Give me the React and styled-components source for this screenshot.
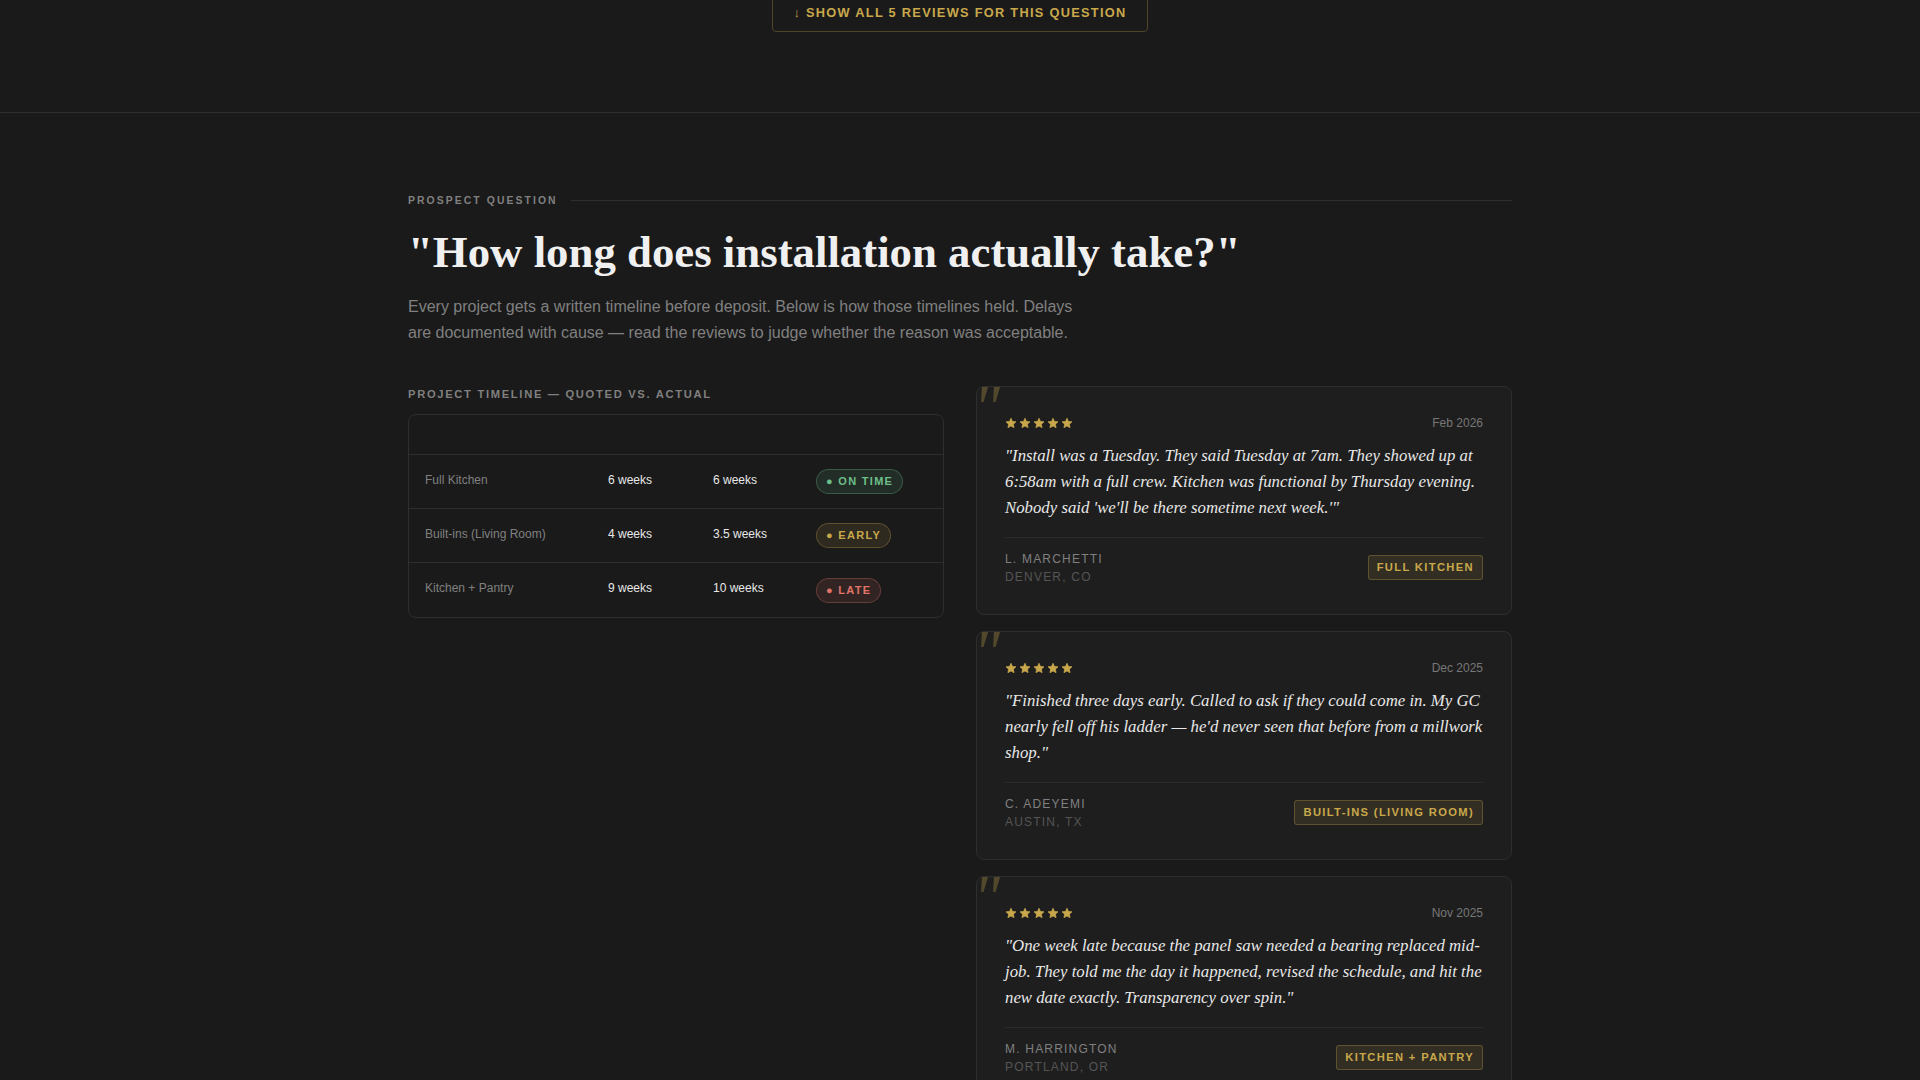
import React from 'react';
import styled, { createGlobalStyle } from 'styled-components';

const GOLD = '#c9a84c';
const MUTED = '#808080';
const SANS = '"Liberation Sans", Arial, sans-serif';
const SERIF = '"Liberation Serif", "Times New Roman", serif';

const GlobalStyle = createGlobalStyle`
  html, body {
    margin: 0;
    height: 1080px;
    overflow: hidden;
    background: #1a1a1a;
  }
`;

const Page = styled.div`
  background: #1a1a1a;
  color: #f0f0f0;
  font-family: ${SANS};
`;

const TopBar = styled.div`
  display: flex;
  justify-content: center;
  height: 112px;
  border-bottom: 1px solid #2e2e2e;
`;

const ShowAll = styled.button`
  align-self: flex-start;
  margin-top: -8px;
  height: 40px;
  width: 376px;
  padding: 0;
  background: transparent;
  border: 1px solid rgba(201, 168, 76, 0.3);
  border-radius: 4px;
  color: ${GOLD};
  font-family: ${SANS};
  font-size: 12.8px;
  font-weight: 700;
  letter-spacing: 0.1em;
`;

const Section = styled.section`
  width: 1104px;
  margin: 0 auto;
  padding-top: 79px;
`;

const Eyebrow = styled.div`
  display: flex;
  align-items: center;
  gap: 13px;
  height: 16px;
  color: ${MUTED};
  font-size: 10.4px;
  font-weight: 700;
  letter-spacing: 0.2em;

  &::after {
    content: '';
    flex: 1;
    height: 1px;
    background: #2e2e2e;
  }
`;

const Question = styled.h2`
  margin: 18px 0 0;
  font-family: ${SERIF};
  font-size: 44.8px;
  font-weight: 700;
  line-height: 1.2;
  color: #f0f0f0;
`;

const Intro = styled.p`
  margin: 14px 0 0;
  max-width: 680px;
  color: ${MUTED};
  font-size: 16px;
  line-height: 26px;
`;

const Columns = styled.div`
  display: grid;
  grid-template-columns: 1fr 1fr;
  gap: 32px;
  margin-top: 40px;
  align-items: start;
`;

const TableTitle = styled.div`
  margin-top: 1px;
  color: ${MUTED};
  font-size: 11.2px;
  font-weight: 700;
  letter-spacing: 0.15em;
  line-height: 14px;
`;

const TableCard = styled.div`
  margin-top: 13px;
  border: 1px solid #2e2e2e;
  border-radius: 8px;
  overflow: hidden;
`;

const Table = styled.table`
  width: 100%;
  border-collapse: collapse;
  table-layout: fixed;
  font-size: 12px;
`;

const HeadRow = styled.tr`
  height: 40px;
`;

const Row = styled.tr`
  height: 54px;
  border-top: 1px solid #2e2e2e;
`;

const Cell = styled.td`
  padding: 0 16px 4px;
  color: ${props => (props.$muted ? MUTED : '#e8e8e8')};
`;

const BadgeCell = styled.td`
  padding: 0 16px;
`;

const BADGES = {
  ontime: { color: '#6dbf8a', bg: 'rgba(109, 191, 138, 0.12)', border: 'rgba(109, 191, 138, 0.3)' },
  early: { color: GOLD, bg: 'rgba(201, 168, 76, 0.12)', border: 'rgba(201, 168, 76, 0.3)' },
  late: { color: '#e0746a', bg: 'rgba(224, 116, 106, 0.12)', border: 'rgba(224, 116, 106, 0.3)' },
};

const Badge = styled.span`
  display: inline-block;
  padding: 0 9px;
  height: 25px;
  box-sizing: border-box;
  line-height: 23px;
  border-radius: 20px;
  border: 1px solid ${props => BADGES[props.$kind].border};
  background: ${props => BADGES[props.$kind].bg};
  color: ${props => BADGES[props.$kind].color};
  font-size: 11px;
  font-weight: 700;
  letter-spacing: 1.3px;
  vertical-align: middle;
`;

const Reviews = styled.div`
  display: flex;
  flex-direction: column;
  gap: 16px;
`;

const ReviewCard = styled.article`
  position: relative;
  box-sizing: border-box;
  padding: 28px;
  background: #1e1e1e;
  border: 1px solid #2e2e2e;
  border-radius: 8px;
`;

const QuoteMark = styled.span`
  position: absolute;
  top: -11px;
  left: -4px;
  font-family: ${SERIF};
  font-style: italic;
  font-size: 64px;
  line-height: 1;
  color: ${GOLD};
  opacity: 0.3;
`;

const ReviewTop = styled.div`
  display: flex;
  justify-content: space-between;
  align-items: center;
  height: 16px;
`;

const Stars = styled.div`
  display: flex;
  gap: 2px;
`;

const StarIcon = styled.svg`
  display: block;
  width: 12px;
  height: 12px;
  fill: ${GOLD};
  stroke: ${GOLD};
  stroke-width: 1.5;
  stroke-linejoin: round;
`;

const ReviewDate = styled.span`
  color: #777;
  font-size: 12px;
`;

const Quote = styled.p`
  margin: 12px 0 0;
  font-family: ${SERIF};
  font-style: italic;
  font-size: 16.8px;
  line-height: 26px;
  color: #e8e8e8;
`;

const ReviewFoot = styled.div`
  display: flex;
  justify-content: space-between;
  align-items: center;
  margin-top: 16px;
  padding-top: 12px;
  border-top: 1px solid #2a2a2a;
`;

const Author = styled.div`
  color: ${MUTED};
  font-size: 12px;
  letter-spacing: 1.2px;
  line-height: 18px;
`;

const Location = styled.div`
  color: #555;
  font-size: 12px;
  letter-spacing: 1.2px;
  line-height: 18px;
`;

const Tag = styled.span`
  padding: 0 8px;
  height: 25px;
  box-sizing: border-box;
  line-height: 23px;
  background: rgba(201, 168, 76, 0.12);
  border: 1px solid rgba(201, 168, 76, 0.3);
  border-radius: 3px;
  color: ${GOLD};
  font-size: 11.2px;
  font-weight: 700;
  letter-spacing: 0.12em;
`;

const timeline = [
  { name: 'Full Kitchen', quoted: '6 weeks', actual: '6 weeks', kind: 'ontime', label: 'ON TIME' },
  { name: 'Built-ins (Living Room)', quoted: '4 weeks', actual: '3.5 weeks', kind: 'early', label: 'EARLY' },
  { name: 'Kitchen + Pantry', quoted: '9 weeks', actual: '10 weeks', kind: 'late', label: 'LATE' },
];

const reviews = [
  {
    date: 'Feb 2026',
    text: '"Install was a Tuesday. They said Tuesday at 7am. They showed up at 6:58am with a full crew. Kitchen was functional by Thursday evening. Nobody said \'we\'ll be there sometime next week.\'"',
    author: 'L. MARCHETTI',
    location: 'DENVER, CO',
    tag: 'FULL KITCHEN',
  },
  {
    date: 'Dec 2025',
    text: '"Finished three days early. Called to ask if they could come in. My GC nearly fell off his ladder — he\'d never seen that before from a millwork shop."',
    author: 'C. ADEYEMI',
    location: 'AUSTIN, TX',
    tag: 'BUILT-INS (LIVING ROOM)',
  },
  {
    date: 'Nov 2025',
    text: '"One week late because the panel saw needed a bearing replaced mid-job. They told me the day it happened, revised the schedule, and hit the new date exactly. Transparency over spin."',
    author: 'M. HARRINGTON',
    location: 'PORTLAND, OR',
    tag: 'KITCHEN + PANTRY',
  },
];

const App = () => (
  <Page>
    <GlobalStyle />
    <TopBar>
      <ShowAll>↓ SHOW ALL 5 REVIEWS FOR THIS QUESTION</ShowAll>
    </TopBar>
    <Section>
      <Eyebrow>PROSPECT QUESTION</Eyebrow>
      <Question>"How long does installation actually take?"</Question>
      <Intro>
        Every project gets a written timeline before deposit. Below is how those timelines held. Delays
        are documented with cause — read the reviews to judge whether the reason was acceptable.
      </Intro>
      <Columns>
        <div>
          <TableTitle>PROJECT TIMELINE — QUOTED VS. ACTUAL</TableTitle>
          <TableCard>
            <Table>
              <colgroup>
                <col width="183" />
                <col width="105" />
                <col width="103" />
                <col />
              </colgroup>
              <thead>
                <HeadRow>
                  <th />
                  <th />
                  <th />
                  <th />
                </HeadRow>
              </thead>
              <tbody>
                {timeline.map(row => (
                  <Row key={row.name}>
                    <Cell $muted>{row.name}</Cell>
                    <Cell>{row.quoted}</Cell>
                    <Cell>{row.actual}</Cell>
                    <BadgeCell><Badge $kind={row.kind}>● {row.label}</Badge></BadgeCell>
                  </Row>
                ))}
              </tbody>
            </Table>
          </TableCard>
        </div>
        <Reviews>
          {reviews.map(review => (
            <ReviewCard key={review.author}>
              <QuoteMark>"</QuoteMark>
              <ReviewTop>
                <Stars>
                  {[0, 1, 2, 3, 4].map(n => (
                    <StarIcon key={n} viewBox="0 0 24 24">
                      <path d="M12 2.5l2.9 6.4 7 .8-5.2 4.7 1.4 6.9-6.1-3.5-6.1 3.5 1.4-6.9-5.2-4.7 7-.8z" />
                    </StarIcon>
                  ))}
                </Stars>
                <ReviewDate>{review.date}</ReviewDate>
              </ReviewTop>
              <Quote>{review.text}</Quote>
              <ReviewFoot>
                <div>
                  <Author>{review.author}</Author>
                  <Location>{review.location}</Location>
                </div>
                <Tag>{review.tag}</Tag>
              </ReviewFoot>
            </ReviewCard>
          ))}
        </Reviews>
      </Columns>
    </Section>
  </Page>
);

export default App;
